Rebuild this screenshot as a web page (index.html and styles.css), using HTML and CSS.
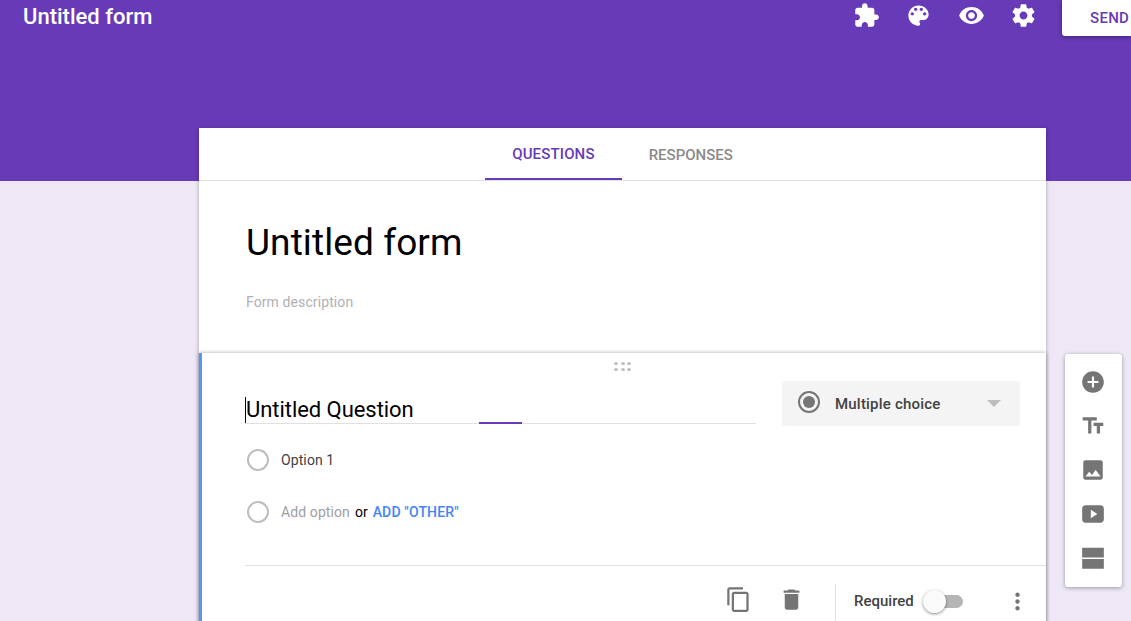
FILE: index.html
```html
<!DOCTYPE html>
<html lang="en">
<head>
    <meta charset="UTF-8">
    <title>Untitled form - Google Forms</title>
    <link rel="stylesheet" href="styles.css">
</head>
<body>

    <!-- Purple band with the top bar -->
    <header class="band">
        <div class="topbar">
            <h1 class="doc-title">Untitled form</h1>
            <div class="top-icons">
                <svg class="top-icon" viewBox="0 0 24 24"><path d="M20.5 11H19V7c0-1.1-.9-2-2-2h-4V3.5C13 2.12 11.88 1 10.5 1S8 2.12 8 3.5V5H4c-1.1 0-1.99.9-1.99 2v3.8H3.5c1.49 0 2.7 1.21 2.7 2.7s-1.21 2.7-2.7 2.7H2V20c0 1.1.9 2 2 2h3.8v-1.5c0-1.49 1.21-2.7 2.7-2.7 1.49 0 2.7 1.21 2.7 2.7V22H17c1.1 0 2-.9 2-2v-4h1.5c1.38 0 2.5-1.12 2.5-2.5S21.88 11 20.5 11z"/></svg>
                <svg class="top-icon" viewBox="0 0 24 24"><path d="M12 3c-4.97 0-9 4.03-9 9s4.03 9 9 9c.83 0 1.5-.67 1.5-1.5 0-.39-.15-.74-.39-1.01-.23-.26-.38-.61-.38-.99 0-.83.67-1.5 1.5-1.5H16c2.76 0 5-2.24 5-5 0-4.42-4.03-8-9-8zm-5.5 9c-.83 0-1.5-.67-1.5-1.5S5.67 9 6.5 9 8 9.67 8 10.5 7.33 12 6.5 12zm3-4C8.67 8 8 7.33 8 6.5S8.67 5 9.5 5s1.5.67 1.5 1.5S10.33 8 9.5 8zm5 0c-.83 0-1.5-.67-1.5-1.5S13.67 5 14.5 5s1.5.67 1.5 1.5S15.33 8 14.5 8zm3 4c-.83 0-1.5-.67-1.5-1.5S16.67 9 17.5 9s1.5.67 1.5 1.5-.67 1.5-1.5 1.5z"/></svg>
                <svg class="top-icon" viewBox="0 0 24 24"><path d="M12 4.5C7 4.5 2.73 7.61 1 12c1.73 4.39 6 7.5 11 7.5s9.27-3.11 11-7.5c-1.73-4.39-6-7.5-11-7.5zM12 17c-2.76 0-5-2.24-5-5s2.24-5 5-5 5 2.24 5 5-2.24 5-5 5zm0-8c-1.66 0-3 1.34-3 3s1.34 3 3 3 3-1.34 3-3-1.34-3-3-3z"/></svg>
                <svg class="top-icon" viewBox="0 0 24 24"><path d="M19.43 12.98c.04-.32.07-.64.07-.98s-.03-.66-.07-.98l2.11-1.65c.19-.15.24-.42.12-.64l-2-3.46c-.12-.22-.39-.3-.61-.22l-2.49 1c-.52-.4-1.08-.73-1.69-.98l-.38-2.65C14.46 2.18 14.25 2 14 2h-4c-.25 0-.46.18-.49.42l-.38 2.65c-.61.25-1.17.59-1.69.98l-2.49-1c-.23-.09-.49 0-.61.22l-2 3.46c-.13.22-.07.49.12.64l2.11 1.65c-.04.32-.07.65-.07.98s.03.66.07.98l-2.11 1.65c-.19.15-.24.42-.12.64l2 3.46c.12.22.39.3.61.22l2.49-1c.52.4 1.08.73 1.69.98l.38 2.65c.03.24.24.42.49.42h4c.25 0 .46-.18.49-.42l.38-2.65c.61-.25 1.17-.59 1.69-.98l2.49 1c.23.09.49 0 .61-.22l2-3.46c.12-.22.07-.49-.12-.64l-2.11-1.65zM12 15.5c-1.93 0-3.5-1.57-3.5-3.5s1.57-3.5 3.5-3.5 3.5 1.57 3.5 3.5-1.57 3.5-3.5 3.5z"/></svg>
            </div>
            <button class="send-btn">SEND</button>
        </div>
    </header>

    <!-- Form and side toolbar -->
    <div class="workspace">
        <main class="form-col">
            <nav class="tabs">
                <a class="tab active">QUESTIONS</a>
                <a class="tab">RESPONSES</a>
            </nav>

            <section class="title-card">
                <h2 class="form-title">Untitled form</h2>
                <p class="form-desc">Form description</p>
            </section>

            <section class="question-card">
                <div class="drag-handle">
                    <i></i><i></i><i></i><i></i><i></i><i></i>
                </div>

                <div class="question-head">
                    <div class="question-input">
                        <span class="caret"></span>
                        <span class="question-text">Untitled Question</span>
                        <span class="input-accent"></span>
                    </div>
                    <div class="type-select">
                        <svg class="type-icon" viewBox="0 0 24 24"><circle cx="12" cy="12" r="10" fill="none" stroke="#757575" stroke-width="2"/><circle cx="12" cy="12" r="6" fill="#757575"/></svg>
                        <span class="type-label">Multiple choice</span>
                        <span class="type-arrow"></span>
                    </div>
                </div>

                <div class="option">
                    <span class="radio"></span>
                    <span class="option-text">Option 1</span>
                </div>
                <div class="option">
                    <span class="radio"></span>
                    <span class="option-text muted">Add option</span>
                    <span class="option-or">or</span>
                    <a class="add-other">ADD "OTHER"</a>
                </div>

                <div class="question-foot">
                    <svg class="foot-icon copy-icon" viewBox="0 0 24 24"><path d="M16 1H4c-1.1 0-2 .9-2 2v14h2V3h12V1zm3 4H8c-1.1 0-2 .9-2 2v14c0 1.1.9 2 2 2h11c1.1 0 2-.9 2-2V7c0-1.1-.9-2-2-2zm0 16H8V7h11v14z"/></svg>
                    <svg class="foot-icon trash-icon" viewBox="0 0 24 24"><path d="M6 19c0 1.1.9 2 2 2h8c1.1 0 2-.9 2-2V7H6v12zM19 4h-3.5l-1-1h-5l-1 1H5v2h14V4z"/></svg>
                    <span class="foot-divider"></span>
                    <span class="required-label">Required</span>
                    <span class="switch"><span class="switch-knob"></span></span>
                    <svg class="foot-icon more-icon" viewBox="0 0 24 24"><path d="M12 8c1.1 0 2-.9 2-2s-.9-2-2-2-2 .9-2 2 .9 2 2 2zm0 2c-1.1 0-2 .9-2 2s.9 2 2 2 2-.9 2-2-.9-2-2-2zm0 6c-1.1 0-2 .9-2 2s.9 2 2 2 2-.9 2-2-.9-2-2-2z"/></svg>
                </div>
            </section>
        </main>

        <aside class="side-tools">
            <svg class="side-icon" viewBox="0 0 24 24"><path d="M12 2C6.48 2 2 6.48 2 12s4.48 10 10 10 10-4.48 10-10S17.52 2 12 2zm5 11h-4v4h-2v-4H7v-2h4V7h2v4h4v2z"/></svg>
            <svg class="side-icon" viewBox="0 0 24 24"><path d="M2.5 4v3h5v12h3V7h5V4h-13zm19 5h-9v3h3v7h3v-7h3V9z"/></svg>
            <svg class="side-icon" viewBox="0 0 24 24"><path d="M21 19V5c0-1.1-.9-2-2-2H5c-1.1 0-2 .9-2 2v14c0 1.1.9 2 2 2h14c1.1 0 2-.9 2-2zM8.5 13.5l2.5 3.01L14.5 12l4.5 6H5l3.5-4.5z"/></svg>
            <svg class="side-icon" viewBox="0 0 24 24"><path fill-rule="evenodd" d="M5 4h14c1.66 0 3 1.34 3 3v10c0 1.66-1.34 3-3 3H5c-1.66 0-3-1.34-3-3V7c0-1.66 1.34-3 3-3zm5 4v8l6-4z"/></svg>
            <svg class="side-icon" viewBox="0 0 24 24"><path d="M2 2.500h20v9H2zM2 13h20v9H2z"/></svg>
        </aside>
    </div>

</body>
</html>
```

FILE: styles.css
```css
/* Basic Styles */
html, body {
    height: 100%;
    overflow: hidden;
}

body {
    margin: 0;
    font-family: Roboto, "Liberation Sans", sans-serif;
    background-color: #ede7f6;
    color: #212121;
}

/* Purple band */
.band {
    height: 181px;
    background-color: #673ab7;
}

.topbar {
    display: flex;
    align-items: flex-start;
    padding-left: 23px;
}

.doc-title {
    margin: 0;
    flex: 1;
    font-size: 22px;
    font-weight: 500;
    line-height: 34px;
    color: #fff;
}

.top-icons {
    display: flex;
    gap: 25.500px;
    margin-top: 2px;
    margin-right: 25px;
}

.top-icon {
    width: 27px;
    height: 27px;
    fill: #fff;
}

.send-btn {
    width: 69px;
    height: 36px;
    padding: 0 0 0 28px;
    border: none;
    border-radius: 0 0 0 3px;
    background-color: #fff;
    color: #673ab7;
    font-family: inherit;
    font-size: 15px;
    font-weight: 500;
    letter-spacing: 0.3px;
    text-align: left;
    white-space: nowrap;
    box-shadow: 0 1px 4px rgba(0, 0, 0, 0.4);
}

/* Main layout */
.workspace {
    display: flex;
    align-items: flex-start;
    gap: 19px;
    margin: -53px 0 0 199px;
}

.form-col {
    width: 847px;
    flex: none;
    background-color: #fff;
    box-shadow: 0 1px 4px rgba(0, 0, 0, 0.3);
}

/* Tabs */
.tabs {
    display: flex;
    justify-content: center;
    height: 52px;
    border-bottom: 1px solid #e0e0e0;
}

.tab {
    padding: 19px 27px 0;
    font-size: 15px;
    font-weight: 500;
    line-height: 16px;
    color: #8a8a8a;
}

.tab.active {
    color: #673ab7;
    border-bottom: 2px solid #673ab7;
    padding-top: 18px;
    letter-spacing: 0.15px;
}

/* Title card */
.title-card {
    height: 172px;
    padding-left: 47px;
    box-sizing: border-box;
    overflow: hidden;
}

.form-title {
    margin: 40px 0 0;
    font-size: 37px;
    font-weight: 400;
    letter-spacing: 0.1px;
    line-height: 44px;
    color: #000;
}

.form-desc {
    margin: 29px 0 0;
    font-size: 14px;
    letter-spacing: 0.1px;
    line-height: 16px;
    color: #b0b0b0;
}

/* Question card */
.question-card {
    border-left: 3px solid #5a95f5;
    padding: 0 26px 0 43px;
    box-shadow: 0 0 4px rgba(0, 0, 0, 0.35);
    height: 300px;
    box-sizing: border-box;
}

.drag-handle {
    display: grid;
    grid-template-columns: repeat(3, 4px);
    gap: 3px 2.500px;
    width: 18px;
    margin-left: 369px;
    padding-top: 9px;
}

.drag-handle i {
    width: 4px;
    height: 3px;
    border-radius: 50%;
    background-color: #bdbdbd;
}

.question-head {
    display: flex;
    justify-content: space-between;
    align-items: flex-start;
    margin-top: 10px;
}

.question-input {
    display: flex;
    position: relative;
    width: 511px;
    height: 43px;
    box-sizing: border-box;
    border-bottom: 1px solid #e0e0e0;
}

.caret {
    width: 1px;
    height: 26px;
    margin-top: 16px;
    background-color: #000;
}

.question-text {
    margin-top: 16px;
    font-size: 22px;
    letter-spacing: -0.05px;
    line-height: 26px;
    color: #000;
}

.input-accent {
    position: absolute;
    left: 234px;
    bottom: -1px;
    width: 43px;
    height: 2px;
    background-color: #673ab7;
}

.type-select {
    display: flex;
    align-items: center;
    width: 238px;
    height: 45px;
    box-sizing: border-box;
    padding: 0 19px 0 15px;
    border-radius: 3px;
    background-color: #f4f4f4;
}

.type-icon {
    width: 24px;
    height: 24px;
    margin-top: -3px;
}

.type-label {
    flex: 1;
    margin-left: 14px;
    font-size: 15px;
    font-weight: 500;
    letter-spacing: 0.2px;
    color: #424242;
}

.type-arrow {
    width: 0;
    height: 0;
    border-left: 7px solid transparent;
    border-right: 7px solid transparent;
    border-top: 7px solid #bdbdbd;
}

/* Options */
.option {
    display: flex;
    align-items: center;
    height: 52px;
    padding-left: 2px;
    font-size: 14px;
}

.question-head + .option {
    margin-top: 8px;
}

.radio {
    width: 22px;
    height: 22px;
    box-sizing: border-box;
    border: 2px solid #bdbdbd;
    border-radius: 50%;
    margin-right: 12px;
}

.option-text {
    color: #424242;
    letter-spacing: 0.1px;
}

.option-text.muted {
    color: #9e9e9e;
}

.option-or {
    margin-left: 5px;
    color: #000;
}

.add-other {
    margin-left: 5px;
    color: #4285f4;
    font-weight: 500;
    letter-spacing: 0.15px;
}

/* Footer row */
.question-foot {
    display: flex;
    align-items: center;
    height: 56px;
    margin: 27px -26px 0 0;
    border-top: 1px solid #e0e0e0;
    padding-top: 0;
}

.foot-icon {
    width: 27px;
    height: 27px;
    fill: #757575;
}

.copy-icon {
    margin-left: 480px;
    margin-top: 10px;
}

.trash-icon {
    margin-left: 26px;
    margin-top: 10px;
}

.foot-divider {
    width: 1px;
    height: 38px;
    margin: 17px 0 0 30px;
    background-color: #e0e0e0;
}

.required-label {
    margin: 14px 0 0 18px;
    font-size: 15px;
    font-weight: 500;
    color: #424242;
}

.switch {
    display: block;
    position: relative;
    width: 33px;
    height: 13px;
    margin: 14px 0 0 16px;
    border-radius: 7px;
    background-color: #b5b5b5;
}

.switch-knob {
    position: absolute;
    left: -7px;
    top: -5px;
    width: 23px;
    height: 23px;
    border-radius: 50%;
    background-color: #fafafa;
    box-shadow: 0 1px 3px rgba(0, 0, 0, 0.45);
}

.more-icon {
    margin: 14px 0 0 41px;
}

/* Side toolbar */
.side-tools {
    display: flex;
    flex-direction: column;
    align-items: center;
    gap: 18px;
    width: 57px;
    height: 233px;
    box-sizing: border-box;
    margin-top: 226px;
    padding: 15px 1px 0 0;
    border-radius: 3px;
    background-color: #fff;
    box-shadow: 0 1px 4px rgba(0, 0, 0, 0.35);
}

.side-icon {
    flex: none;
    width: 26px;
    height: 26px;
    fill: #757575;
}
```
